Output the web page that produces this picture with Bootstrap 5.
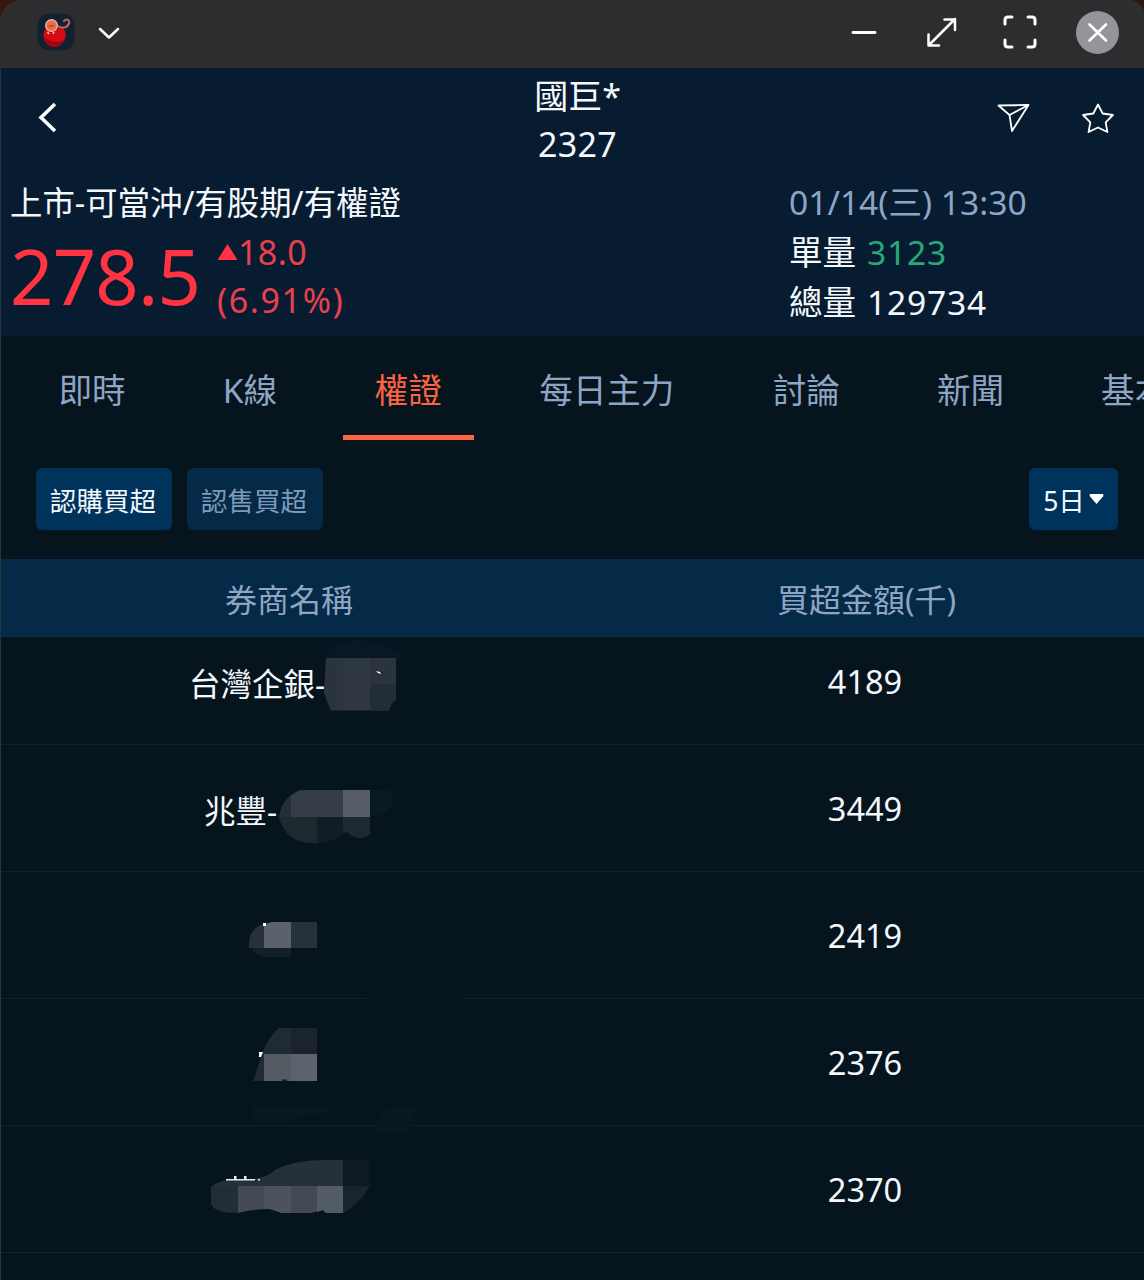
<!DOCTYPE html>
<html lang="zh-Hant">
<head>
<meta charset="utf-8">
<meta name="viewport" content="width=device-width, initial-scale=1">
<title>國巨* 2327</title>
<link href="https://cdn.jsdelivr.net/npm/bootstrap@5.3.0/dist/css/bootstrap.min.css" rel="stylesheet">
<style>
body{background:#06141e;color:#f4f8fc;font-family:"Noto Sans","Noto Sans CJK TC",sans-serif;width:1144px;height:1280px;overflow:hidden}
svg{display:block;flex:none;fill:none;stroke:#fff}
.screen{height:1280px;overflow:hidden}
.screen::before{content:"";position:absolute;left:0;top:68px;width:1px;height:1212px;background:#26343f;z-index:3}
.winwrap{background:linear-gradient(90deg,#35190b 50%,#2a1512 50%)}
.winbar{height:68px;background:#2d2d2f;border-radius:22px 14px 0 0;padding:0 25px 4px 37px}
.stock{background:#071c30;height:268px}
.topline{height:102px;padding:0 30px 2px 38px}
.topline>div{flex:1 1 0}
.title{font-size:34px;line-height:48px;padding-left:3px;padding-top:3px}
.code{letter-spacing:.3px}
.info{height:166px;padding:8px 0 0 10px}
.quote{width:779px}
.market{font-size:32.4px;line-height:48px}
.price{font-size:76px;line-height:100px;letter-spacing:-.8px;color:#ff3341;width:207px}
.delta{font-size:34px;line-height:48px;color:#e8404e;padding-top:2px}
.delta .up{letter-spacing:.4px}
.delta .pct{letter-spacing:1.6px}
.side{font-size:33.6px;line-height:50px;margin-top:-1px}
.side .num{letter-spacing:.8px;margin-left:2px}
.muted{color:#8ea5c4}
.green{color:#2aa879}
.tabs{height:104px;padding-left:27px;gap:34px}
.tabs .nav-link{font-size:33.6px;line-height:50px;padding:29px 31.500px 20px 31.500px;border-bottom:5px solid transparent;color:#8ea5c4;white-space:nowrap}
.tabs .nav-link.active{color:#ff6440;border-color:#ff6440;padding-right:32px;padding-left:32px}
.tabs .wide{letter-spacing:.3px;margin-right:1px}
.filters{height:119px;padding:28px 26px 0 36px;gap:15px}
.filters .btn{height:62px;border:0;border-radius:6px;font-size:26.5px;line-height:40px;padding:4px 2px 0 0;width:136px;background:#00335b;color:#f4f8fc;white-space:nowrap}
.filters .off{background:#042a47;color:#7f99b9}
.filters .days{width:89px;padding-right:0}
.filters .days svg{margin-top:-3px}
.thead-bar{height:78px;background:#052a47;font-size:32px;line-height:46px;color:#8ea5c4;border-bottom:1px solid #0b3046}
.thead-bar .cellval{padding-left:3px}
.cellname{width:578px;text-align:center}
.cellval{width:574px;text-align:center}
.list{overflow:hidden}
.item{height:127px;border-bottom:1px solid #0c2337;position:relative}
.item:first-child{margin-top:-19px}
.item .cellname{font-size:31.5px;text-align:left;padding-top:5px}
.item .cellval{font-size:32.5px;line-height:46px;padding-top:1px}
.mask{position:absolute;left:0;top:0;overflow:visible;stroke:none}
.item .cellname,.thead-bar .cellname{flex:none}
.item .cellval,.thead-bar .cellval{flex:none}
</style>
</head>
<body>
<main class="screen position-relative">
  <div class="winwrap">
    <div class="winbar d-flex align-items-center justify-content-between">
      <div class="d-flex align-items-center">
        <svg width="38" height="38" viewBox="37 14 38 38">
          <rect x="37.500" y="14.500" width="37" height="37" rx="12" fill="#14202f" stroke="none"/>
          <path d="M44 32c-2 8 3 16 10 16s14-8 11-16c-3-5-7-2-10-2s-9-2-11 2z" fill="#d40a14" stroke="none"/>
          <path d="M45 38c1 7 5 10 9 10s8-3 10-7c-6 3-14 3-19-3z" fill="#9c0710" stroke="none"/>
          <path d="M56 26q5 4 10 2q4-3 3-6q-2-3-5 0" stroke="#b9645c" stroke-width="2.200" stroke-linecap="round"/>
          <circle cx="51.500" cy="26.500" r="5.800" fill="#ee6c42" stroke="#d9bfc3" stroke-width="1.300"/>
          <path d="M49 27h5" stroke="#c4502f" stroke-width="2"/>
          <path d="M47.500 33l1.500 2M54 33l-1 2" stroke="#ffb9b3" stroke-width="1.600"/>
        </svg>
        <svg width="22" height="14" viewBox="0 0 22 14" style="margin-left:23px" stroke-linecap="round" stroke-linejoin="round"><path d="M2 4l9 8.500 9-8.500" stroke-width="2.500"/></svg>
      </div>
      <div class="d-flex align-items-center">
        <svg width="268" height="44" viewBox="851 10 268 44" stroke-linecap="round" stroke-linejoin="round">
          <path d="M853 32.500h22" stroke-width="2.800"/>
          <path d="M929 45l26-26M944.500 19.500h10.500v10.500M928.500 34.500V45.500H939" stroke-width="2.500"/>
          <path d="M1005 24v-4q0-3 3-3h4M1028 17h4q3 0 3 3v4M1035 40v4q0 3-3 3h-4M1012 47h-4q-3 0-3-3v-4" stroke-width="3"/>
          <circle cx="1097.500" cy="32.500" r="21.500" fill="#96949a" stroke="none"/>
          <path d="M1089.500 24.500l16.500 16M1106 24.500l-16.500 16" stroke-width="2.600"/>
        </svg>
      </div>
    </div>
  </div>

  <header class="stock">
    <div class="topline d-flex align-items-center">
      <div><svg width="20" height="32" viewBox="38 102 20 32"><path d="M55 104L41 117.500l14 13.500" stroke-width="3.600"/></svg></div>
      <div class="title text-center">國巨*<div class="code">2327</div></div>
      <div class="d-flex justify-content-end">
        <svg width="118" height="32" viewBox="996 102 118 32" stroke-width="1.800" stroke-linejoin="round">
          <path d="M998.500 105.500L1028.500 105l-16.500 26-2.500-16zM1009.500 115l19-10"/>
          <path d="M1098 104.500l4.700 9 10.200 1.500-7.200 7.400 1.700 9.600-9.400-4.500-9.400 4.500 1.700-9.600-7.200-7.400 10.200-1.500z"/>
        </svg>
      </div>
    </div>
    <div class="info d-flex">
      <div class="quote">
        <div class="market">上市-可當沖/有股期/有權證</div>
        <div class="d-flex">
          <div class="price">278.5</div>
          <div class="delta">
            <div class="up d-flex align-items-center"><svg width="21" height="16" viewBox="0 0 21 16"><path d="M.500 16L10.500 0l10 16z" fill="#ff3341" stroke="none"/></svg>18.0</div>
            <div class="pct">(6.91%)</div>
          </div>
        </div>
      </div>
      <div class="side">
        <div class="muted">01/14(三) 13:30</div>
        <div>單量 <span class="green num">3123</span></div>
        <div>總量 <span class="num">129734</span></div>
      </div>
    </div>
  </header>

  <nav class="nav tabs flex-nowrap overflow-hidden">
    <a class="nav-link">即時</a><a class="nav-link">K線</a><a class="nav-link active">權證</a><a class="nav-link wide">每日主力</a><a class="nav-link">討論</a><a class="nav-link">新聞</a><a class="nav-link">基本</a>
  </nav>

  <div class="filters d-flex">
    <button class="btn">認購買超</button>
    <button class="btn off">認售買超</button>
    <button class="btn days ms-auto d-flex align-items-center justify-content-center">5日<svg class="ms-1" width="15" height="11" viewBox="0 0 15 11"><path d="M1 0h13q1 1 0 2.500L7.500 10 1 2.500Q0 1 1 0z" fill="#fff" stroke="none"/></svg></button>
  </div>

  <div class="thead-bar d-flex align-items-center pt-1">
    <div class="cellname">券商名稱</div><div class="cellval">買超金額(千)</div>
  </div>

  <div class="list">
    <div class="item d-flex align-items-center">
      <div class="cellname" style="padding-left:189px">台灣企銀-</div><div class="cellval">4189</div>
      <svg class="mask" width="572" height="127" viewBox="0 618 572 127">
        <path d="M326 658q1-16 30-18q30 2 49 18z" fill="#071927"/>
        <path d="M326 658H396V700q-5 2-7 10.500H331q-4-8-7-18z" fill="#2b343d"/>
        <path d="M370 684h26v16q-5 2-7 10.500H370z" fill="#232d36"/>
        <path d="M343 658h27v52H343z" fill="#2f3740"/>
        <path d="M376 671l4 1 1 2-3-1z" fill="#fff"/>
      </svg>
    </div>
    <div class="item d-flex align-items-center">
      <div class="cellname" style="padding-left:204px">兆豐-</div><div class="cellval">3449</div>
      <svg class="mask" width="572" height="127" viewBox="0 745 572 127">
        <path d="M370 790h18q6 4 5 12-4 14-23 14z" fill="#091a25"/>
        <path d="M279 817q3-19 21-27h70v27H279z" fill="#353e46"/>
        <path d="M279 817q3-15 12-22v22z" fill="#252f38"/>
        <path d="M343 790h27v27h-27z" fill="#555c65"/>
        <path d="M279 817h38v26q-31 2-38-26z" fill="#1c292e"/>
        <path d="M317 817h53v17q-11 9-23-2-10 9-30 11z" fill="#121c27"/>
        <path d="M343 817h27v17q-11 9-23-2l-4 1z" fill="#1d2831"/>
      </svg>
    </div>
    <div class="item d-flex align-items-center">
      <div class="cellname"></div><div class="cellval">2419</div>
      <svg class="mask" width="572" height="127" viewBox="0 872 572 127">
        <path d="M249 948q-2-23 23-26h45v26z" fill="#27313a"/>
        <path d="M264 925l8-3h19v26h-27z" fill="#5b626b"/>
        <path d="M251 948h40v9h-22q-14 0-18-9z" fill="#13202a"/>
        <path d="M263 923h3v3h-3z" fill="#fff"/>
        <path d="M367 996h97v4h-97z" fill="#06141e"/>
      </svg>
    </div>
    <div class="item d-flex align-items-center">
      <div class="cellname"></div><div class="cellval">2376</div>
      <svg class="mask" width="572" height="127" viewBox="0 999 572 127">
        <path d="M253 1081l11-32q5-13 15-21h38v53z" fill="#202a34"/>
        <path d="M291 1028h26v26h-26z" fill="#1a232f"/>
        <path d="M264 1054h27v27h-27z" fill="#545b62"/>
        <path d="M291 1054h26v27h-26z" fill="#5c636c"/>
        <path d="M282 1079.500h5v1.500h-5z" fill="#111c25"/>
        <path d="M259 1052h4l-2 5h-2z" fill="#fff"/>
        <path d="M250 1107h83q-6 8-30 8-16 13-48 7zM386 1107h30l-8 27h-34z" fill="#081720"/>
      </svg>
    </div>
    <div class="item d-flex align-items-center">
      <div class="cellname"></div><div class="cellval">2370</div>
      <svg class="mask" width="572" height="127" viewBox="0 1126 572 127">
        <path d="M343 1160h27v26l-27 20z" fill="#0d1a24"/>
        <path d="M211 1187q9-7 22-8 32 2 42-9 19-10 48-10h20v27z" fill="#253038"/>
        <path d="M343 1186h27q-12 20-27 27z" fill="#19252d"/>
        <path d="M211 1187l3-1h24v27q-24 0-27-9z" fill="#232d36"/>
        <path d="M238 1186h105v27h-17l-3-3-12 3h-29l-12-4q-18 0-32 4z" fill="#434a53"/>
        <path d="M264 1186h27v27h-9l-12-4-6-.500z" fill="#4c535d"/>
        <path d="M317 1186h26v27h-17l-3-3-6 2z" fill="#535b64"/>
        <path d="M226 1179h29v1.500h-29zM234 1176h2.500v4H234zM244 1176h2.500v4H244zM258 1179h2v1.500h-2z" fill="#e8eef2"/>
      </svg>
    </div>
  </div>
</main>
<script src="https://cdn.jsdelivr.net/npm/bootstrap@5.3.0/dist/js/bootstrap.bundle.min.js"></script>
</body>
</html>
